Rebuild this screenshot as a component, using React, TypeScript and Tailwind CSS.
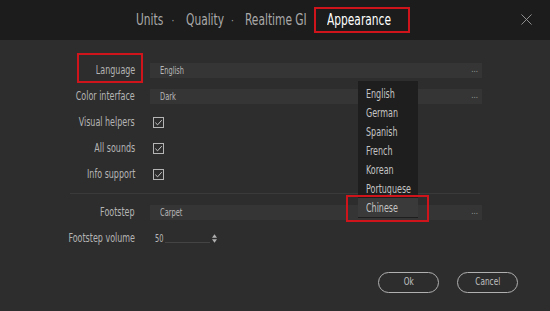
import { useState } from 'react'

const font = { fontFamily: '"DejaVu Sans Condensed", "Liberation Sans", sans-serif' }

const languages = ['English', 'German', 'Spanish', 'French', 'Korean', 'Portuguese', 'Chinese']

// the original UI uses a very narrow face; squeeze DejaVu Condensed horizontally
function Narrow({ children, right = false }: { children: React.ReactNode; right?: boolean }) {
  return (
    <span className={`inline-block whitespace-nowrap scale-x-[0.74] ${right ? 'origin-right' : 'origin-left'}`}>
      {children}
    </span>
  )
}

function Check() {
  return (
    <div className="ml-[3px] w-[11px] h-[11px] border border-[#b5b5b5] flex items-center justify-center">
      <svg viewBox="0 0 10 10" className="w-[9px] h-[9px]" fill="none" stroke="#c8c8c8" strokeWidth="1.1">
        <path d="M1.5 5.2 L4 7.6 L8.6 2.4" />
      </svg>
    </div>
  )
}

function Field({ value }: { value: string }) {
  return (
    <div className="w-[332px] h-[15px] bg-[#353535] flex items-center justify-between pl-[10px] pr-[4px] text-[10px] text-[#b8b8b8]">
      <Narrow>{value}</Narrow>
      <span className="text-[8px] text-[#9a9a9a] leading-none">...</span>
    </div>
  )
}

function Row({ label, children }: { label: string; children: React.ReactNode }) {
  return (
    <div className="h-[26px] flex items-center">
      <div className="w-[136px] text-right text-[12px] text-[#b4b4b4] pr-[1px]">
        <Narrow right>{label}</Narrow>
      </div>
      <div className="ml-[14px] flex items-center">{children}</div>
    </div>
  )
}

export default function App() {
  const [lang] = useState('English')
  return (
    <div className="w-[550px] h-[311px] bg-[#2d2d2d] relative overflow-hidden" style={font}>
      <div className="h-[40px] bg-[#1c1c1c] flex items-center relative">
        <div className="flex items-center text-[16px] text-[#a9a9a9] ml-[136px]">
          <span className="w-[24px]"><Narrow>Units</Narrow></span>
          <span className="w-[26px] text-center text-[10px]">·</span>
          <span className="w-[34px]"><Narrow>Quality</Narrow></span>
          <span className="w-[25px] text-center text-[10px]">·</span>
          <span className="w-[56px]"><Narrow>Realtime GI</Narrow></span>
          <span className="ml-[13px] border-2 border-[#d0141b] w-[96px] h-[26px] pl-[11px] flex items-center text-white">
            <Narrow>Appearance</Narrow>
          </span>
        </div>
        <svg viewBox="0 0 12 12" className="absolute right-[18px] top-[14px] w-[11px] h-[11px]" stroke="#9a9a9a" strokeWidth="1">
          <path d="M0.5 0.5 L11.5 11.5 M11.5 0.5 L0.5 11.5" />
        </svg>
      </div>

      <div className="pt-[17px]">
        <Row label="Language">
          <Field value={lang} />
        </Row>
        <Row label="Color interface">
          <Field value="Dark" />
        </Row>
        <Row label="Visual helpers">
          <Check />
        </Row>
        <Row label="All sounds">
          <Check />
        </Row>
        <Row label="Info support">
          <Check />
        </Row>
        <div className="mt-[6px] ml-[70px] w-[410px] h-px bg-[#3a3a3a]" />
        <div className="mt-[5px]">
          <Row label="Footstep">
            <Field value="Carpet" />
          </Row>
          <Row label="Footstep volume">
            <div className="flex items-center text-[10px] text-[#b8b8b8]">
              <span className="ml-[5px] w-[10px]"><Narrow>50</Narrow></span>
              <div className="w-[45px] h-px bg-[#444] mt-[8px]" />
              <svg viewBox="0 0 6 10" className="w-[5px] h-[9px] ml-[2px]" fill="#b0b0b0">
                <path d="M3 0 L6 4 L0 4 Z M0 6 L6 6 L3 10 Z" />
              </svg>
            </div>
          </Row>
        </div>

        <div className="flex mt-[21px] ml-[378px] gap-[18px] text-[11px] text-[#c0c0c0]">
          <button className="w-[61px] h-[21px] rounded-full border-[1.5px] border-[#b0b0b0] flex items-center justify-center">
            <span className="inline-block scale-x-[0.74]">Ok</span>
          </button>
          <button className="w-[61px] h-[21px] rounded-full border-[1.5px] border-[#b0b0b0] flex items-center justify-center">
            <span className="inline-block scale-x-[0.74]">Cancel</span>
          </button>
        </div>
      </div>

      {/* Language red highlight */}
      <div className="absolute left-[77px] top-[53px] w-[66px] h-[30px] border-2 border-[#d0141b]" />

      {/* Dropdown list */}
      <div className="absolute left-[358px] top-[81px] w-[60px] h-[137px] bg-[#1e1e1e] pt-[3px] text-[12px] text-[#c4c4c4]">
        {languages.map((l) => (
          <div key={l} className={`h-[19px] flex items-center pl-[8px] ${l === 'Chinese' ? 'bg-[#3a3a3a]' : ''}`}>
            <Narrow>{l}</Narrow>
          </div>
        ))}
      </div>
      <div className="absolute left-[346px] top-[195px] w-[83px] h-[27px] border-2 border-[#d0141b]" />
    </div>
  )
}
